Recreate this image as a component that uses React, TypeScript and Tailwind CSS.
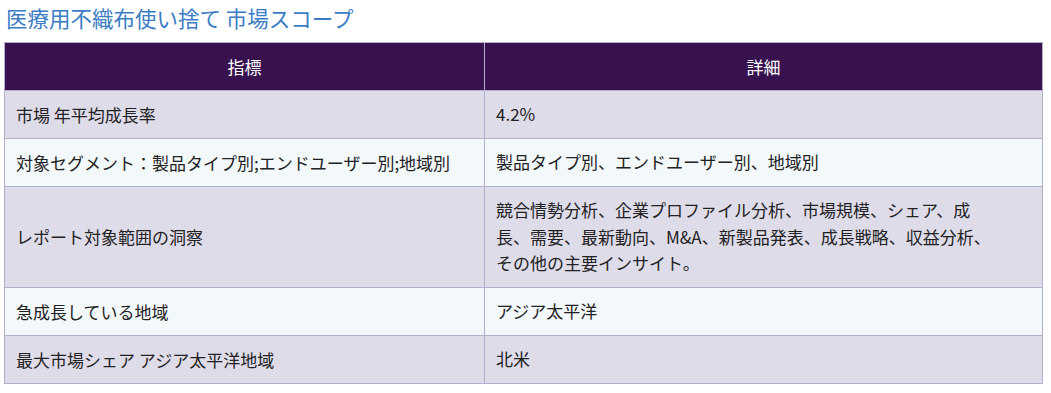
const rows: { label: string; detail: React.ReactNode }[] = [
  { label: '市場 年平均成長率', detail: '4.2%' },
  {
    label: '対象セグメント：製品タイプ別;エンドユーザー別;地域別',
    detail: '製品タイプ別、エンドユーザー別、地域別',
  },
  {
    label: 'レポート対象範囲の洞察',
    detail: (
      <>
        競合情勢分析、企業プロファイル分析、市場規模、シェア、成
        <br />
        長、需要、最新動向、M&amp;A、新製品発表、成長戦略、収益分析、
        <br />
        その他の主要インサイト。
      </>
    ),
  },
  { label: '急成長している地域', detail: 'アジア太平洋' },
  { label: '最大市場シェア アジア太平洋地域', detail: '北米' },
];

export default function App() {
  return (
    <div
      className="w-[1051px] h-[393px] bg-white pl-[4px] pt-[2px]"
      style={{ fontFamily: '"Noto Sans CJK JP", "Noto Sans", sans-serif' }}
    >
      <h2 className="text-[21.5px] leading-[31px] text-[#3b7cc4] pl-[2px] mb-[9px] whitespace-nowrap">
        医療用不織布使い捨て 市場スコープ
      </h2>
      <table className="w-[1039px] border-collapse text-[17px] text-[#222222]">
        <thead>
          <tr className="bg-[#37124e] text-white">
            <th className="w-[480px] border border-[#b3aecb] font-normal pt-[10px] pb-[10px] leading-[27px] text-center">
              指標
            </th>
            <th className="border border-[#b3aecb] font-normal pt-[10px] pb-[10px] leading-[27px] text-center">
              詳細
            </th>
          </tr>
        </thead>
        <tbody>
          {rows.map((r, i) => (
            <tr key={i} className={i % 2 === 0 ? 'bg-[#dfdcea]' : 'bg-[#f3f8fb]'}>
              <td className="border border-[#b3aecb] pl-[11px] pr-[11px] pt-[10px] pb-[10px] leading-[27px] align-middle whitespace-nowrap">
                {r.label}
              </td>
              <td className="border border-[#b3aecb] pl-[11px] pr-[11px] pt-[10px] pb-[10px] leading-[26.5px] align-middle">
                {r.detail}
              </td>
            </tr>
          ))}
        </tbody>
      </table>
    </div>
  );
}
